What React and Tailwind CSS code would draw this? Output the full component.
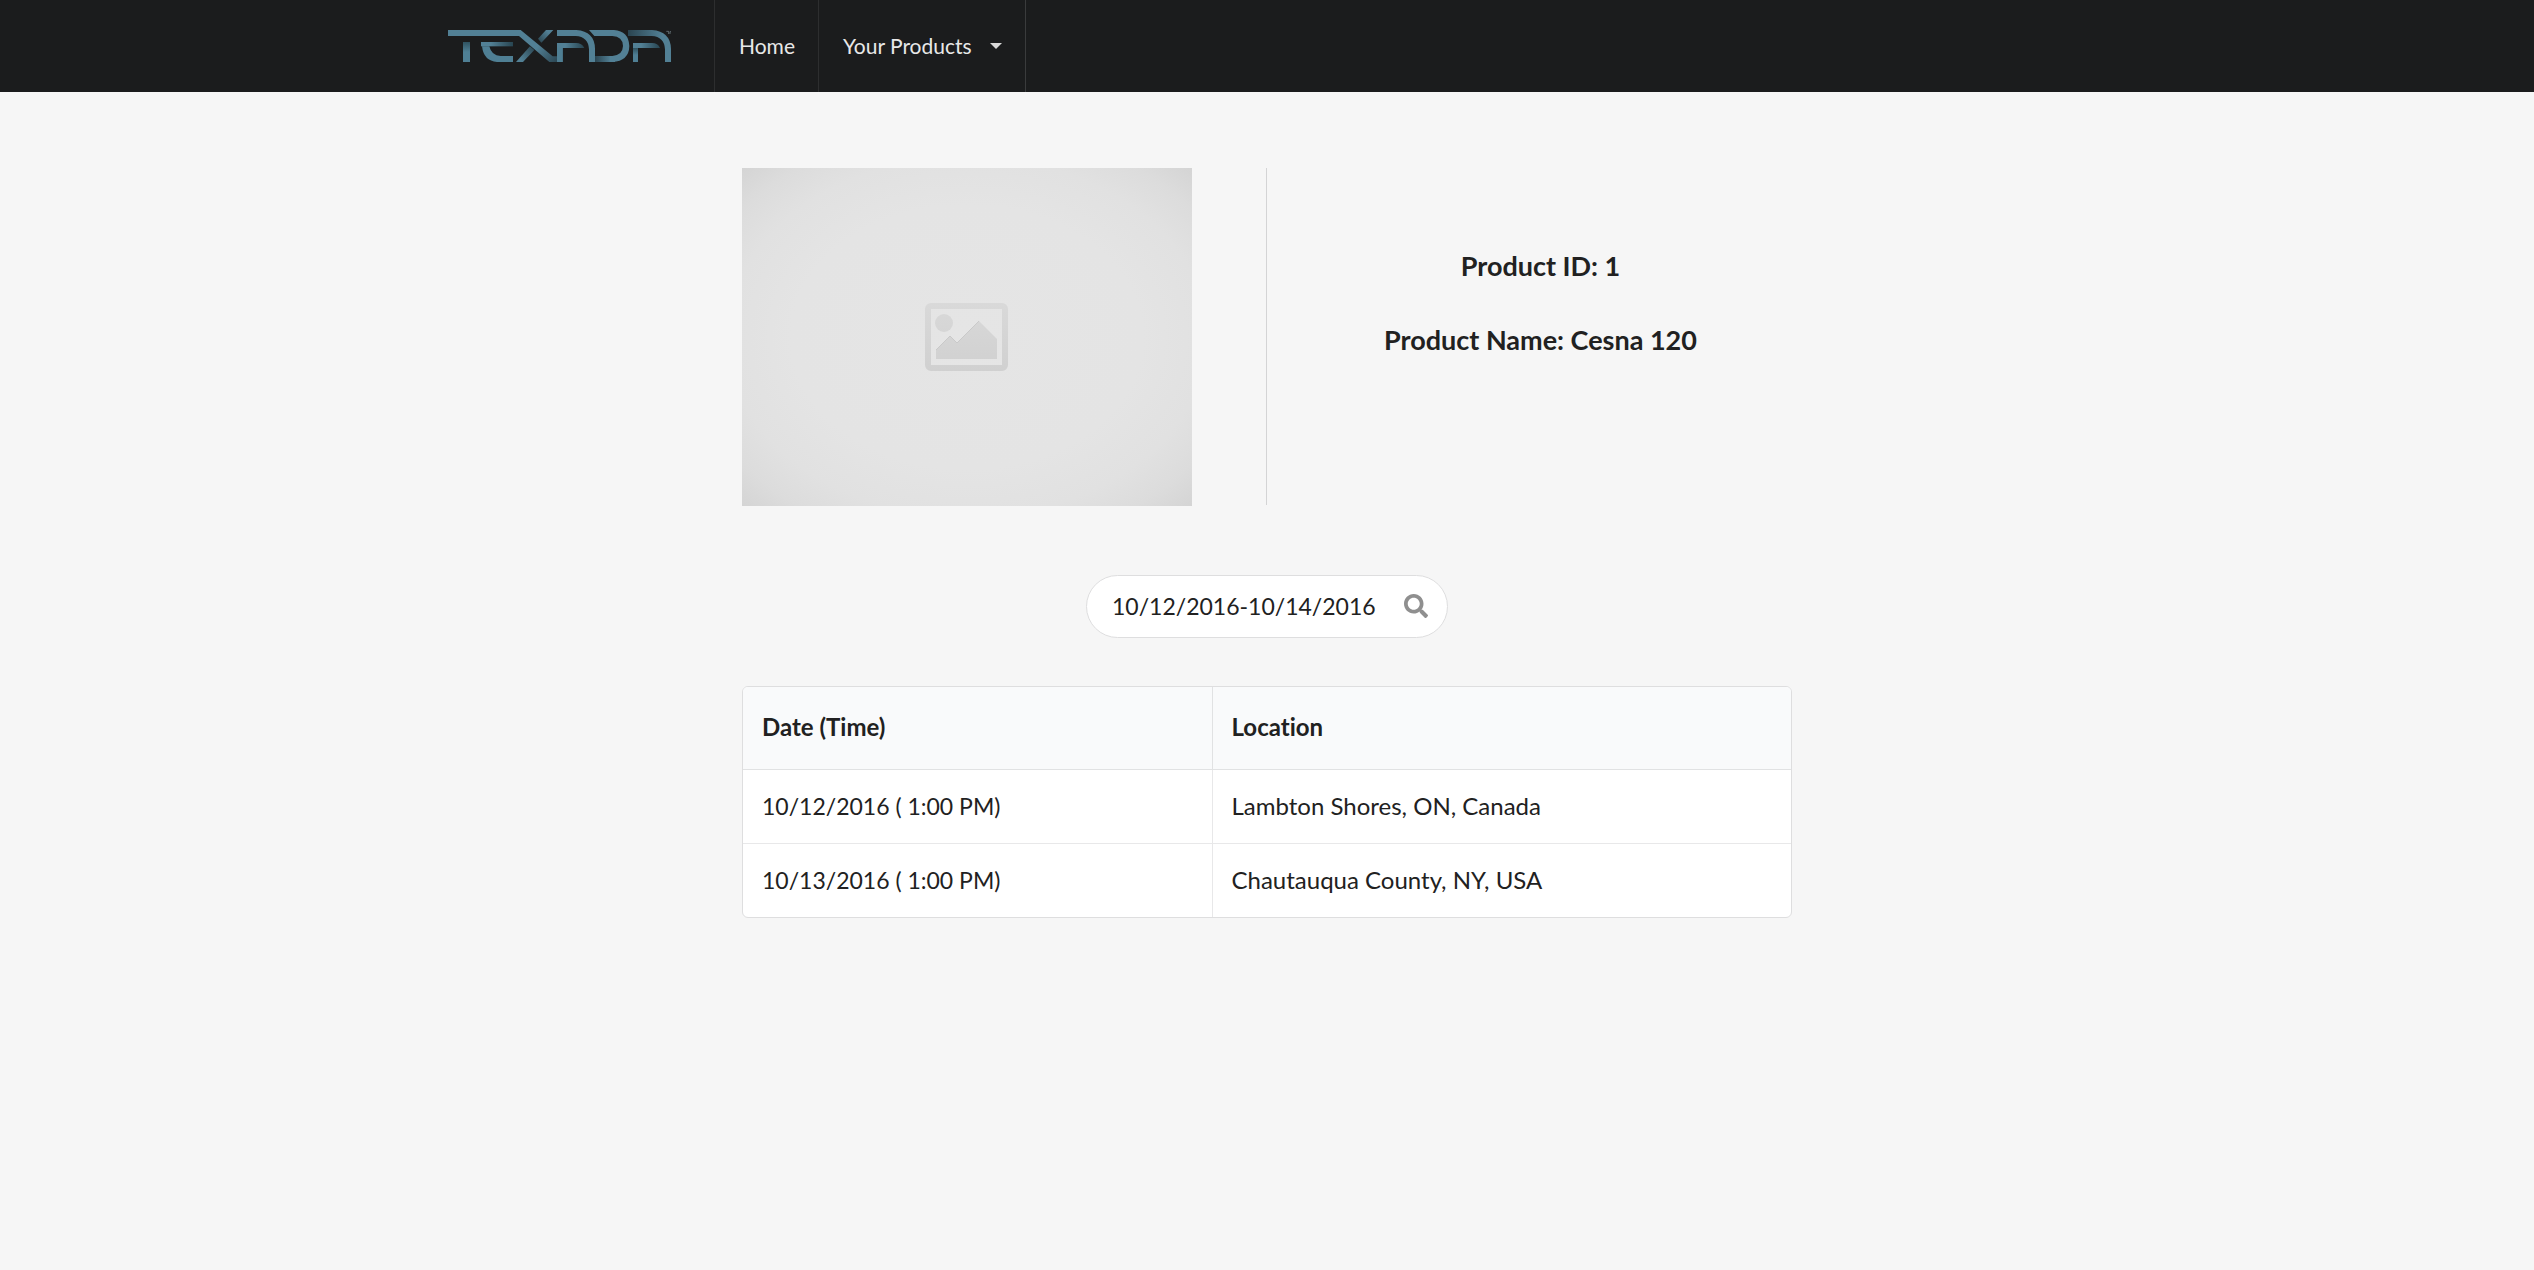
import React from "react";
import { FaSearch } from "react-icons/fa";

function Logo() {
  return (
    <svg width="223" height="32" viewBox="0 0 669 96" role="img" aria-label="Texada">
      <defs>
        <linearGradient id="down" x1="0" y1="0" x2="0" y2="1">
          <stop offset="0" stopColor="#2f5260" />
          <stop offset="0.5" stopColor="#4f7f94" />
        </linearGradient>
        <linearGradient id="right" x1="0" y1="0" x2="1" y2="0">
          <stop offset="0.3" stopColor="#528095" />
          <stop offset="1" stopColor="#284551" />
        </linearGradient>
        <linearGradient id="left" x1="0" y1="0" x2="1" y2="0">
          <stop offset="0" stopColor="#2a4450" />
          <stop offset="0.8" stopColor="#528095" />
        </linearGradient>
        <linearGradient id="cross" gradientUnits="userSpaceOnUse" x1="210" y1="0" x2="330" y2="96">
          <stop offset="0.5" stopColor="#528095" />
          <stop offset="1" stopColor="#2a4450" />
        </linearGradient>
        <linearGradient id="armUp" gradientUnits="userSpaceOnUse" x1="270" y1="38" x2="310" y2="0">
          <stop offset="0" stopColor="#27404b" />
          <stop offset="0.8" stopColor="#528095" />
        </linearGradient>
        <linearGradient id="armDown" gradientUnits="userSpaceOnUse" x1="205" y1="96" x2="262" y2="48">
          <stop offset="0.2" stopColor="#528095" />
          <stop offset="1" stopColor="#27404b" />
        </linearGradient>
      </defs>
      <path d="M45 36h21v60H45z" fill="url(#down)" />
      <path d="M102 49h22q6 28 34 29h37v18h-48q-40-3-45-47z" fill="#4f7f94" />
      <path d="M99 36h96v13H99z" fill="url(#right)" />
      <path d="M270 26 294 0h22l-36 38z" fill="url(#armUp)" />
      <path d="M204 96 246 49l13 11-34 36z" fill="url(#armDown)" />
      <path d="M206 18V0h12l96 79h16v17h-26L213 18z" fill="url(#cross)" />
      <path d="M0 0h218v18H0z" fill="#528095" />
      <path d="M327 39h57q18 0 25 15h-65v42h-17z" fill="url(#right)" />
      <path d="M327 54h17v42h-17z" fill="#4f7f94" />
      <path d="M327 0h58q55 4 56 56v40h-18V58q-2-38-40-40h-56z" fill="#528095" />
      <path d="M441 78h60v18h-60z" fill="url(#left)" />
      <path d="M540 0h72q55 4 57 56v40h-18V58q-2-38-40-40h-71z" fill="url(#left)" />
      <path d="M423 0h75q44 3 46 48-1 45-51 48h-8V78h8q31-2 32-30-1-29-32-30h-54z" fill="#528095" />
      <path d="M555 39h57q18 0 24 15h-66v42h-15z" fill="url(#right)" />
      <path d="M555 54h15v42h-15z" fill="url(#down)" />
      <path d="M655 4h7v8M666 12V5h3" fill="none" stroke="#7d8e95" strokeWidth="2" />
    </svg>
  );
}

function Placeholder() {
  return (
    <svg className="w-[450px]" viewBox="0 0 450 338" role="img" aria-label="Product image">
      <defs>
        <radialGradient id="vignette" cx="0.5" cy="0.5" r="0.71">
          <stop offset="0" stopColor="#e5e5e5" />
          <stop offset="0.55" stopColor="#e4e4e4" />
          <stop offset="0.75" stopColor="#e1e1e1" />
          <stop offset="0.88" stopColor="#dcdcdc" />
          <stop offset="1" stopColor="#d4d4d4" />
        </radialGradient>
        <linearGradient id="glyph" gradientUnits="userSpaceOnUse" x1="0" y1="135" x2="0" y2="203">
          <stop offset="0" stopColor="#d9d9d9" />
          <stop offset="1" stopColor="#d0d0d0" />
        </linearGradient>
      </defs>
      <path d="M0 0h450v338H0z" fill="url(#vignette)" />
      <rect x="186" y="138" width="77" height="62" rx="3" fill="none" stroke="url(#glyph)" strokeWidth="6" />
      <circle cx="202" cy="155" r="9" fill="url(#glyph)" />
      <path d="m194 182 14-14 7 7 22-22 18 18v20h-61z" fill="url(#glyph)" />
      <path d="m194 182 14-14 7 7 22-22" fill="none" stroke="#bcbcbc" strokeWidth="0.6" />
    </svg>
  );
}

const rows = [
  ["10/12/2016 ( 1:00 PM)", "Lambton Shores, ON, Canada"],
  ["10/13/2016 ( 1:00 PM)", "Chautauqua County, NY, USA"],
];

export default function App() {
  return (
    <div className="min-h-screen bg-[#f6f6f6] font-[Lato,sans-serif] text-[#212121] [font-variant-ligatures:none]">
      <header className="bg-[#1b1c1d]">
        <nav className="mx-auto flex h-[92px] max-w-[1690px] items-stretch text-[21px] text-[#e8e8e8]">
          <a href="#top" className="flex items-center border-r border-[#2d2e2f] pr-[43px] pl-[26px]">
            <Logo />
          </a>
          <a href="#home" className="flex items-center border-r border-[#2d2e2f] pr-[23px] pl-6">
            Home
          </a>
          <button type="button" className="flex items-center gap-[18px] border-r border-[#3a3b3c] pr-[23px] pl-6">
            Your Products
            <svg width="12" height="6" viewBox="0 0 12 6" aria-hidden="true">
              <path d="M0 0h12L6 6z" fill="#d9d9d9" />
            </svg>
          </button>
        </nav>
      </header>
      <main className="mx-auto max-w-[1050px] pt-[76px]">
        <section className="flex">
          <Placeholder />
          <div className="mb-px ml-[74px] w-px bg-[#d4d4d5]" />
          <div className="flex flex-1 flex-col items-center gap-[42px] pt-[82px] pl-[22px] text-[27px] leading-8 font-bold">
            <h2>Product ID: 1</h2>
            <h2>Product Name: Cesna 120</h2>
          </div>
        </section>
        <form className="mt-[69px] flex justify-center">
          <div className="flex h-[63px] w-[362px] items-center rounded-full border border-[#dededf] bg-white pr-[19px] pb-px pl-[25px]">
            <input
              aria-label="Date range"
              defaultValue="10/12/2016-10/14/2016"
              className="min-w-0 flex-1 bg-transparent text-[23px] text-[#212121] outline-none"
            />
            <button type="button" aria-label="Search" className="text-[#8f8f8f]">
              <FaSearch size={24} />
            </button>
          </div>
        </form>
        <div className="mt-12 overflow-hidden rounded-md border border-[#dededf] bg-white">
          <table className="w-full table-fixed text-left leading-[30px]">
            <thead className="bg-[#f9fafb] text-[24px]">
              <tr>
                <th className="h-[82px] w-[469px] border-b border-[#e1e2e3] px-[19px] pb-0.5 font-bold">Date (Time)</th>
                <th className="border-b border-l border-[#e1e2e3] px-[19px] pb-0.5 font-bold">Location</th>
              </tr>
            </thead>
            <tbody>
              {rows.map(([date, place]) => (
                <tr key={date} className="border-b border-[#e8e8e9] last:border-b-0">
                  <td className="h-[74px] px-[19px] text-[23px]">{date}</td>
                  <td className="border-l border-[#e8e8e9] px-[19px] text-[24px]">{place}</td>
                </tr>
              ))}
            </tbody>
          </table>
        </div>
      </main>
    </div>
  );
}
